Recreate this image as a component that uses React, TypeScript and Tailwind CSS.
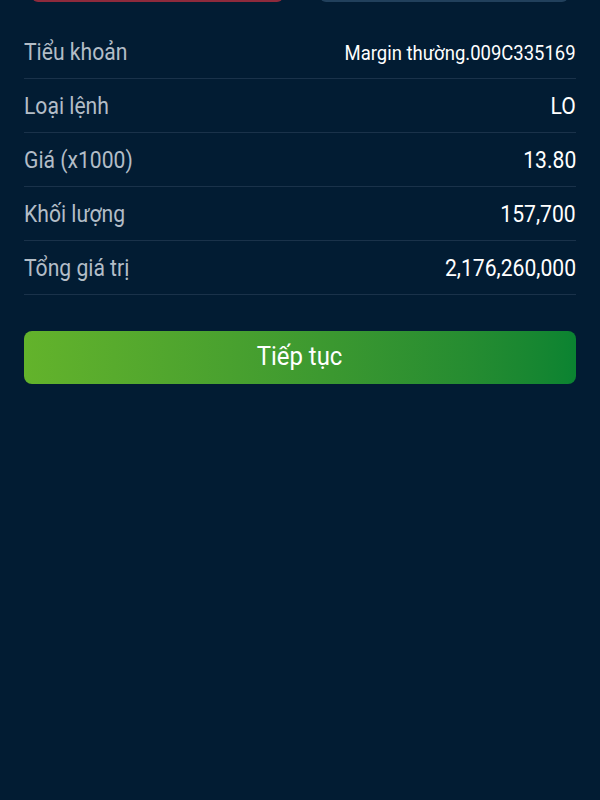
const rows = [
  { label: "Tiểu khoản", value: "Margin thường.009C335169", small: true },
  { label: "Loại lệnh", value: "LO" },
  { label: "Giá (x1000)", value: "13.80" },
  { label: "Khối lượng", value: "157,700" },
  { label: "Tổng giá trị", value: "2,176,260,000" },
];

export default function App() {
  return (
    <div className="w-[600px] h-[800px] overflow-hidden bg-[#021c33] font-['Roboto',sans-serif]">
      <div className="flex gap-[37px] px-8 -mt-[40px]">
        <button className="h-[42px] w-[251px] rounded-md bg-[#c8243c] border-b-2 border-[#8e2a3c]" />
        <button className="h-[42px] w-[248px] rounded-md bg-[#10304d] border-b-2 border-[#21405c]" />
      </div>
      <div className="px-6 pt-[23px]">
        {rows.map((r) => (
          <div
            key={r.label}
            className="h-[54px] flex items-center justify-between border-b border-[#1a324a]"
          >
            <span className="block text-[24px] leading-none text-[#b3bdc7] scale-x-[0.88] origin-left whitespace-nowrap">
              {r.label}
            </span>
            <span
              className={
                r.small
                  ? "block text-[21px] leading-none text-white scale-x-[0.88] origin-right whitespace-nowrap mt-[3px]"
                  : "block text-[24px] leading-none text-white scale-x-[0.88] origin-right whitespace-nowrap"
              }
            >
              {r.value}
            </span>
          </div>
        ))}
        <button className="mt-9 w-full h-[53px] rounded-lg bg-gradient-to-r from-[#63b32b] to-[#0a8331] text-white">
          <span className="inline-block text-[26px] leading-none scale-x-[0.92]">Tiếp tục</span>
        </button>
      </div>
    </div>
  );
}
